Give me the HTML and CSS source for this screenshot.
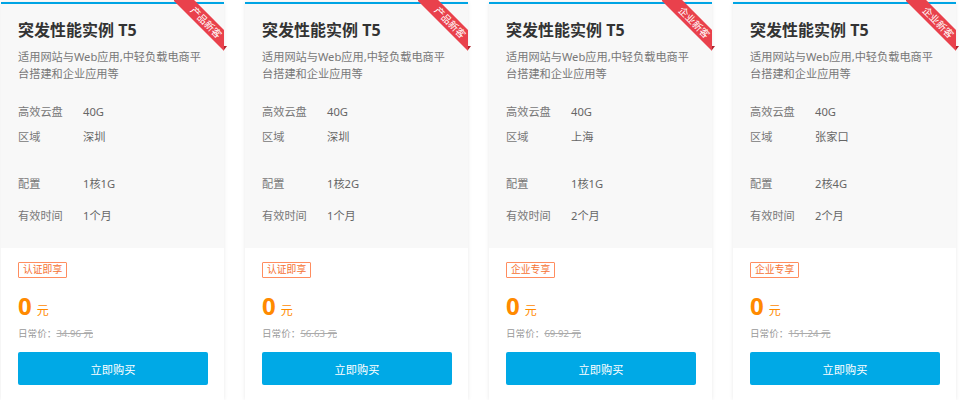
FILE: index.html
```html
<!DOCTYPE html>
<html lang="zh-CN">
<head>
<meta charset="utf-8">
<title>突发性能实例 T5</title>
<link rel="stylesheet" href="styles.css">
</head>
<body>
<div class="cards">
  <div class="card">
    <div class="ribbon-wrap"><span class="ribbon">产品新客</span></div>
    <span class="ribbon-fold"></span>
    <div class="card-top">
      <h3 class="title">突发性能实例 T5</h3>
      <p class="desc">适用网站与Web应用,中轻负载电商平台搭建和企业应用等</p>
      <div class="spec spec-disk"><span class="label">高效云盘</span><span class="value">40G</span></div>
      <div class="spec spec-region"><span class="label">区域</span><span class="value">深圳</span></div>
      <div class="spec spec-config"><span class="label">配置</span><span class="value">1核1G</span></div>
      <div class="spec"><span class="label">有效时间</span><span class="value">1个月</span></div>
    </div>
    <div class="card-bottom">
      <span class="tag">认证即享</span>
      <div class="price"><span class="num">0</span><span class="unit">元</span></div>
      <div class="old">日常价：<s>34.96 元</s></div>
      <button class="buy">立即购买</button>
    </div>
  </div>
  <div class="card">
    <div class="ribbon-wrap"><span class="ribbon">产品新客</span></div>
    <span class="ribbon-fold"></span>
    <div class="card-top">
      <h3 class="title">突发性能实例 T5</h3>
      <p class="desc">适用网站与Web应用,中轻负载电商平台搭建和企业应用等</p>
      <div class="spec spec-disk"><span class="label">高效云盘</span><span class="value">40G</span></div>
      <div class="spec spec-region"><span class="label">区域</span><span class="value">深圳</span></div>
      <div class="spec spec-config"><span class="label">配置</span><span class="value">1核2G</span></div>
      <div class="spec"><span class="label">有效时间</span><span class="value">1个月</span></div>
    </div>
    <div class="card-bottom">
      <span class="tag">认证即享</span>
      <div class="price"><span class="num">0</span><span class="unit">元</span></div>
      <div class="old">日常价：<s>56.63 元</s></div>
      <button class="buy">立即购买</button>
    </div>
  </div>
  <div class="card">
    <div class="ribbon-wrap"><span class="ribbon">企业新客</span></div>
    <span class="ribbon-fold"></span>
    <div class="card-top">
      <h3 class="title">突发性能实例 T5</h3>
      <p class="desc">适用网站与Web应用,中轻负载电商平台搭建和企业应用等</p>
      <div class="spec spec-disk"><span class="label">高效云盘</span><span class="value">40G</span></div>
      <div class="spec spec-region"><span class="label">区域</span><span class="value">上海</span></div>
      <div class="spec spec-config"><span class="label">配置</span><span class="value">1核1G</span></div>
      <div class="spec"><span class="label">有效时间</span><span class="value">2个月</span></div>
    </div>
    <div class="card-bottom">
      <span class="tag">企业专享</span>
      <div class="price"><span class="num">0</span><span class="unit">元</span></div>
      <div class="old">日常价：<s>69.92 元</s></div>
      <button class="buy">立即购买</button>
    </div>
  </div>
  <div class="card">
    <div class="ribbon-wrap"><span class="ribbon">企业新客</span></div>
    <span class="ribbon-fold"></span>
    <div class="card-top">
      <h3 class="title">突发性能实例 T5</h3>
      <p class="desc">适用网站与Web应用,中轻负载电商平台搭建和企业应用等</p>
      <div class="spec spec-disk"><span class="label">高效云盘</span><span class="value">40G</span></div>
      <div class="spec spec-region"><span class="label">区域</span><span class="value">张家口</span></div>
      <div class="spec spec-config"><span class="label">配置</span><span class="value">2核4G</span></div>
      <div class="spec"><span class="label">有效时间</span><span class="value">2个月</span></div>
    </div>
    <div class="card-bottom">
      <span class="tag">企业专享</span>
      <div class="price"><span class="num">0</span><span class="unit">元</span></div>
      <div class="old">日常价：<s>151.24 元</s></div>
      <button class="buy">立即购买</button>
    </div>
  </div>
</div>
</body>
</html>
```

FILE: styles.css
```css
* { box-sizing: border-box; }
html, body { margin: 0; padding: 0; background: #fff; }
body {
  font-family: "Noto Sans", "Noto Sans CJK SC", sans-serif;
  color: #666;
}
.cards {
  display: grid;
  grid-template-columns: repeat(4, 223px);
  column-gap: 21px;
  padding: 2px 0 0 1px;
}
.card {
  position: relative;
  height: 398px;
  border-top: 2px solid #00a4e4;
  background: #fff;
  box-shadow: 0 0 4px rgba(0, 0, 0, 0.09);
  display: flex;
  flex-direction: column;
}
.card-top {
  height: 244px;
  background: #f8f8f8;
  padding: 16px 17px 0;
}
.title {
  margin: 0;
  font-size: 16px;
  line-height: 20px;
  font-weight: 700;
  color: #333;
}
.desc {
  margin: 8px 0 0;
  font-size: 11.2px;
  line-height: 17px;
  color: #777;
  width: 190px;
}
.spec {
  display: flex;
  font-size: 11.2px;
  line-height: 17px;
  color: #777;
}
.spec-disk { margin-top: 21px; }
.spec-disk, .spec-region, .spec-config { margin-bottom: 8px; }
.spec-region { margin-bottom: 30px; }
.spec-config { margin-bottom: 15px; }
.label { width: 65px; }
.value { color: #666; }
.card-bottom {
  flex: 1;
  padding: 14px 17px 0;
  display: flex;
  flex-direction: column;
  align-items: flex-start;
}
.tag {
  display: inline-block;
  border: 1px solid #ff8d5f;
  border-radius: 1px;
  color: #f57232;
  font-size: 9.8px;
  line-height: 14px;
  padding: 0 4px;
}
.price {
  margin-top: 14px;
  display: flex;
  align-items: baseline;
  color: #ff8a00;
  line-height: 28px;
}
.num { font-size: 24px; font-weight: 700; }
.unit { font-size: 12px; margin-left: 5px; }
.old {
  margin-top: 2px;
  font-size: 9.6px;
  line-height: 14px;
  color: #999;
}
.old s { color: #aaa; }
.buy {
  margin-top: 11px;
  width: 190px;
  height: 33px;
  border: 0;
  border-radius: 2px;
  background: #00a9e6;
  color: #fff;
  font-family: inherit;
  font-size: 11.2px;
  cursor: pointer;
}
.ribbon-wrap {
  position: absolute;
  top: -4px;
  right: 0;
  width: 50px;
  height: 52px;
  overflow: hidden;
  z-index: 2;
}
.ribbon {
  position: absolute;
  left: -8px;
  top: 14.5px;
  width: 80px;
  height: 15px;
  background: #e9414c;
  color: #fff;
  font-size: 9.8px;
  line-height: 15px;
  text-align: center;
  transform: rotate(45deg);
}
.ribbon-fold {
  position: absolute;
  right: -3px;
  top: 42px;
  width: 0;
  height: 0;
  border-left: 3px solid #b0222c;
  border-bottom: 4px solid transparent;
  z-index: 1;
}
```
